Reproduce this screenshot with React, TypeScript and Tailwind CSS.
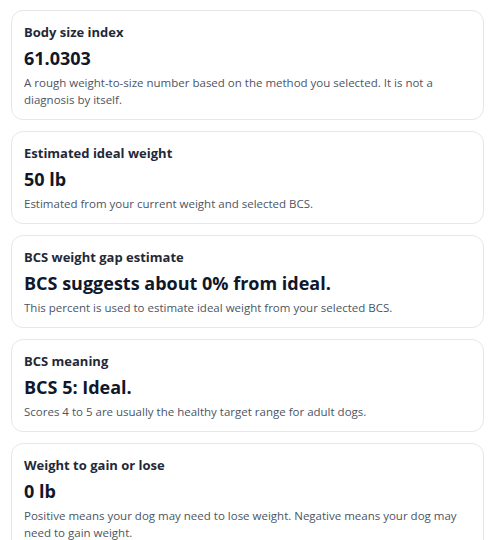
import React from 'react';

type Result = {
    title: string;
    value: string;
    note: string;
};

const results: Result[] = [
    {
        title: 'Body size index',
        value: '61.0303',
        note: 'A rough weight-to-size number based on the method you selected. It is not a diagnosis by itself.',
    },
    {
        title: 'Estimated ideal weight',
        value: '50 lb',
        note: 'Estimated from your current weight and selected BCS.',
    },
    {
        title: 'BCS weight gap estimate',
        value: 'BCS suggests about 0% from ideal.',
        note: 'This percent is used to estimate ideal weight from your selected BCS.',
    },
    {
        title: 'BCS meaning',
        value: 'BCS 5: Ideal.',
        note: 'Scores 4 to 5 are usually the healthy target range for adult dogs.',
    },
    {
        title: 'Weight to gain or lose',
        value: '0 lb',
        note: 'Positive means your dog may need to lose weight. Negative means your dog may need to gain weight.',
    },
];

const App: React.FC = () => {
    return (
        <div className="min-h-screen bg-white px-[11px] pt-[10px] pb-6 font-['Open_Sans',sans-serif]">
            <div className="flex flex-col gap-[11px]">
                {results.map((r) => (
                    <div key={r.title} className="rounded-xl border border-[#e5e7eb] bg-white px-3 pt-3 pb-[11px]">
                        <h3 className="text-[13px] leading-[18px] font-bold text-[#1f2937]">{r.title}</h3>
                        <p className="mt-[3px] text-[18px] leading-[28px] font-bold text-[#0f172a]">{r.value}</p>
                        <p className="mt-[2px] text-[11.5px] leading-[17px] text-[#4b5563]">{r.note}</p>
                    </div>
                ))}
            </div>
        </div>
    );
};

export default App;
